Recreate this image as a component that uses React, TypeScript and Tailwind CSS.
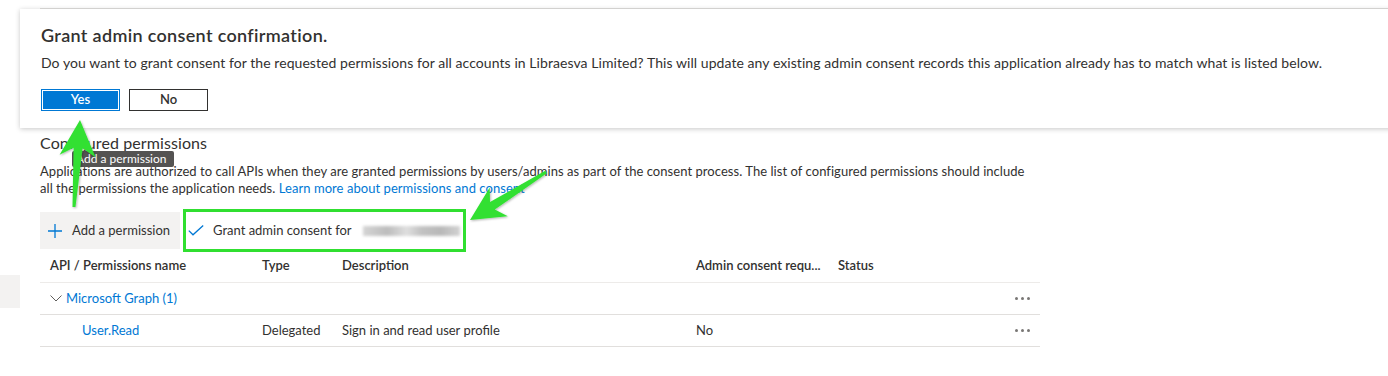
import React from "react";

// builds a skitch-style arrow polygon from tail to tip
const arrowPoints = (
  tx: number,
  ty: number,
  hx: number,
  hy: number,
  headLen: number,
  headW: number,
  w0: number,
  w1: number
) => {
  const dx = hx - tx;
  const dy = hy - ty;
  const len = Math.hypot(dx, dy);
  const ux = dx / len;
  const uy = dy / len;
  const px = -uy;
  const py = ux;
  const p = (a: number, b: number) => `${(tx + ux * a + px * b).toFixed(1)},${(ty + uy * a + py * b).toFixed(1)}`;
  const neck = len - headLen * 0.78;
  const back = len - headLen;
  return [
    p(0, -w0 / 2),
    p(neck, -w1 / 2),
    p(back, -headW / 2),
    p(len, 0),
    p(back, headW / 2),
    p(neck, w1 / 2),
    p(0, w0 / 2),
  ].join(" ");
};

const Dots = () => (
  <div className="flex gap-[3px]">
    {[0, 1, 2].map((i) => (
      <span key={i} className="w-[3px] h-[3px] rounded-full bg-[#797775]" />
    ))}
  </div>
);

const columns = "grid grid-cols-[212px_80px_354px_142px_1fr_50px]";

const App = () => {
  return (
    <div className="relative w-[1388px] h-[376px] overflow-hidden bg-white text-[#323130] font-['Lato','Open_Sans',sans-serif]">
      {/* page line behind the dialog */}
      <div className="mt-[8px] ml-[40px] border-t border-[#e1dfdd]" />

      <div className="flex">
        {/* collapsed nav */}
        <div className="w-[20px] shrink-0">
          <div className="mt-[266px] h-[33px] bg-[#f3f2f1]" />
        </div>

        <main className="ml-[20px] w-[1000px] pt-[123px]">
          <h2 className="text-[16px] leading-[22px] tracking-[0.1px]">Configured permissions</h2>
          <p className="mt-[9px] text-[13px] leading-[17px] w-[1000px] tracking-[0.05px]">
            Applications are authorized to call APIs when they are granted permissions by users/admins as part of the
            consent process. The list of configured permissions should include
            <br />
            all the permissions the application needs.{" "}
            <span className="text-[#0078d4]">Learn more about permissions and consent</span>
          </p>

          {/* Command bar */}
          <div className="mt-[15px] flex items-center gap-[6px] h-[37px] text-[13px]">
            <button className="h-full w-[140px] bg-[#f3f2f1] flex items-center pl-[8px] gap-[10px]">
              <svg width="14" height="14" viewBox="0 0 14 14">
                <path d="M7 0v14M0 7h14" stroke="#0078d4" strokeWidth="1.3" />
              </svg>
              <span>Add a permission</span>
            </button>
            <button className="h-full w-[277px] flex items-center pl-[2px] gap-[9px] ring-[3px] ring-[#30df30]">
              <svg width="16" height="11" viewBox="0 0 16 11">
                <path d="M0.8 5.6 L5 9.8 L15.2 0.6" fill="none" stroke="#0078d4" strokeWidth="1.3" />
              </svg>
              <span>Grant admin consent for</span>
              <span className="ml-[2px] w-[97px] h-[10px] blur-[1.5px] bg-[linear-gradient(90deg,#d4d4d4,#bcbcbc_25%,#dedede_45%,#c2c2c2_60%,#b8b8b8_80%,#d2d2d2)]" />
            </button>
          </div>

          {/* Permissions table */}
          <div className="text-[13px]">
            <div className={`${columns} h-[34px] items-center border-b border-[#edebe9] font-semibold`}>
              <div className="pl-[10px]">API / Permissions name</div>
              <div className="pl-[10px]">Type</div>
              <div className="pl-[10px]">Description</div>
              <div className="pl-[10px] whitespace-nowrap">Admin consent requ...</div>
              <div className="pl-[10px]">Status</div>
              <div />
            </div>
            <div className={`${columns} h-[32px] items-center border-b border-[#e1dfdd]`}>
              <div className="pl-[10px] flex items-center gap-[4px] whitespace-nowrap">
                <svg width="12" height="7" viewBox="0 0 12 7">
                  <path d="M0.5 0.5 L6 6 L11.5 0.5" fill="none" stroke="#605e5c" strokeWidth="1" />
                </svg>
                <span className="text-[#0078d4]">Microsoft Graph (1)</span>
              </div>
              <div />
              <div />
              <div />
              <div />
              <div className="flex justify-end pr-[10px]">
                <Dots />
              </div>
            </div>
            <div className={`${columns} h-[32px] items-center border-b border-[#e1dfdd]`}>
              <div className="pl-[42px] text-[#0078d4]">User.Read</div>
              <div className="pl-[10px]">Delegated</div>
              <div className="pl-[10px]">Sign in and read user profile</div>
              <div className="pl-[10px]">No</div>
              <div />
              <div className="flex justify-end pr-[10px]">
                <Dots />
              </div>
            </div>
          </div>
        </main>
      </div>

      {/* Confirmation dialog over the page */}
      <div className="absolute left-[20px] top-[9px] w-[1380px] h-[119px] bg-white shadow-[0_1px_5px_rgba(0,0,0,0.22)] pl-[21px] pt-[14px]">
        <h1 className="text-[18px] leading-[24px] font-semibold tracking-[0.33px]">Grant admin consent confirmation.</h1>
        <p className="mt-[6px] text-[14px] leading-[20px] whitespace-nowrap tracking-[0.065px]">
          Do you want to grant consent for the requested permissions for all accounts in Libraesva Limited? This will
          update any existing admin consent records this application already has to match what is listed below.
        </p>
        <div className="mt-[16px] flex gap-[9px]">
          <button className="w-[79px] h-[22px] bg-[#0078d4] border border-[#0078d4] shadow-[inset_0_0_0_1px_#ffffff] text-white text-[13px] font-semibold">
            Yes
          </button>
          <button className="w-[79px] h-[22px] bg-white border border-[#323130] text-[13px] font-semibold">No</button>
        </div>
      </div>

      {/* Tooltip */}
      <div className="absolute left-[72px] top-[151px] h-[16px] w-[102px] bg-[#545352] text-white text-[12px] leading-[16px] pl-[4px] rounded-[2px]">
        Add a permission
      </div>

      {/* Annotation arrows */}
      <svg className="absolute inset-0 pointer-events-none" width="1388" height="376">
        <defs>
          <filter id="sh" x="-20%" y="-20%" width="140%" height="140%">
            <feDropShadow dx="0.8" dy="1" stdDeviation="1" floodColor="#000" floodOpacity="0.3" />
          </filter>
        </defs>
        <polygon points={arrowPoints(74, 207, 80, 120, 36, 36, 3, 9)} fill="#33e033" filter="url(#sh)" />
        <polygon points={arrowPoints(546, 172, 470, 220, 34, 34, 3, 9)} fill="#33e033" filter="url(#sh)" />
      </svg>
    </div>
  );
};

export default App;
